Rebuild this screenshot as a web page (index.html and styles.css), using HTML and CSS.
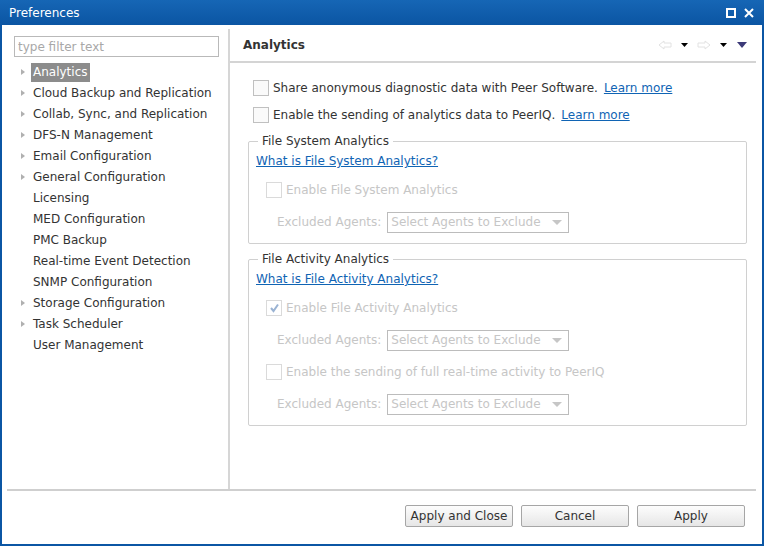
FILE: index.html
```html
<!DOCTYPE html>
<html lang="en">
<head>
    <meta charset="UTF-8">
    <title>Preferences</title>
    <link rel="stylesheet" href="styles.css">
</head>
<body>
    <div class="window">
        <div class="titlebar">
            <span class="title">Preferences</span>
            <div class="win-btns">
                <svg width="10" height="10" viewBox="0 0 10 10"><rect x="1" y="1" width="8" height="8" fill="none" stroke="#fff" stroke-width="2"/></svg>
                <svg width="10" height="10" viewBox="0 0 10 10"><path d="M1 1 L9 9 M9 1 L1 9" stroke="#fff" stroke-width="2"/></svg>
            </div>
        </div>
        <div class="main">
            <div class="left">
                <input class="filter" type="text" placeholder="type filter text">
                <ul class="tree">
                    <li class="has-kids"><span class="sel">Analytics</span></li>
                    <li class="has-kids"><span>Cloud Backup and Replication</span></li>
                    <li class="has-kids"><span>Collab, Sync, and Replication</span></li>
                    <li class="has-kids"><span>DFS-N Management</span></li>
                    <li class="has-kids"><span>Email Configuration</span></li>
                    <li class="has-kids"><span>General Configuration</span></li>
                    <li><span>Licensing</span></li>
                    <li><span>MED Configuration</span></li>
                    <li><span>PMC Backup</span></li>
                    <li><span>Real-time Event Detection</span></li>
                    <li><span>SNMP Configuration</span></li>
                    <li class="has-kids"><span>Storage Configuration</span></li>
                    <li class="has-kids"><span>Task Scheduler</span></li>
                    <li><span>User Management</span></li>
                </ul>
            </div>
            <div class="right">
                <div class="page-head">
                    <h1>Analytics</h1>
                    <div class="nav">
                        <svg width="14" height="10" viewBox="0 0 14 10"><path d="M1 5 L6 1 L6 3 L13 3 L13 7 L6 7 L6 9 Z" fill="#fff" stroke="#e2e2e2"/></svg>
                        <svg width="7" height="4" viewBox="0 0 7 4"><path d="M0 0 L7 0 L3.5 4 Z" fill="#000"/></svg>
                        <svg width="14" height="10" viewBox="0 0 14 10"><path d="M13 5 L8 1 L8 3 L1 3 L1 7 L8 7 L8 9 Z" fill="#fff" stroke="#e2e2e2"/></svg>
                        <svg width="7" height="4" viewBox="0 0 7 4"><path d="M0 0 L7 0 L3.5 4 Z" fill="#000"/></svg>
                        <svg class="menu" width="10" height="6" viewBox="0 0 10 6"><path d="M0 0 L10 0 L5 6 Z" fill="#3c3a78"/></svg>
                    </div>
                </div>
                <div class="page-body">
                    <div class="check-row">
                        <span class="box"></span>
                        <span>Share anonymous diagnostic data with Peer Software.</span>
                        <a href="#">Learn more</a>
                    </div>
                    <div class="check-row">
                        <span class="box"></span>
                        <span>Enable the sending of analytics data to PeerIQ.</span>
                        <a href="#">Learn more</a>
                    </div>

                    <fieldset class="group">
                        <legend>File System Analytics</legend>
                        <a href="#" class="what">What is File System Analytics?</a>
                        <div class="check-row off">
                            <span class="box"></span>
                            <span>Enable File System Analytics</span>
                        </div>
                        <div class="agents off">
                            <span>Excluded Agents:</span>
                            <div class="combo">Select Agents to Exclude<i></i></div>
                        </div>
                    </fieldset>

                    <fieldset class="group">
                        <legend>File Activity Analytics</legend>
                        <a href="#" class="what">What is File Activity Analytics?</a>
                        <div class="check-row off">
                            <span class="box checked">
                                <svg width="11" height="10" viewBox="0 0 11 10"><path d="M2 5 L4.5 8 L9 1.5" fill="none" stroke="#9ab3d3" stroke-width="2"/></svg>
                            </span>
                            <span>Enable File Activity Analytics</span>
                        </div>
                        <div class="agents off">
                            <span>Excluded Agents:</span>
                            <div class="combo">Select Agents to Exclude<i></i></div>
                        </div>
                        <div class="check-row off">
                            <span class="box"></span>
                            <span>Enable the sending of full real-time activity to PeerIQ</span>
                        </div>
                        <div class="agents off">
                            <span>Excluded Agents:</span>
                            <div class="combo">Select Agents to Exclude<i></i></div>
                        </div>
                    </fieldset>
                </div>
            </div>
        </div>
        <div class="footer">
            <button>Apply and Close</button>
            <button>Cancel</button>
            <button>Apply</button>
        </div>
    </div>
</body>
</html>
```

FILE: styles.css
```css
* {
    margin: 0;
    padding: 0;
    box-sizing: border-box;
}

body {
    font-family: "DejaVu Sans", Verdana, sans-serif;
    font-size: 12px;
    color: #333;
}

.window {
    width: 764px;
    height: 546px;
    background: #fff;
    border: 2px solid #0b56a4;
    border-top: none;
    display: flex;
    flex-direction: column;
}

.titlebar {
    height: 25px;
    margin: 0 -2px;
    padding: 0 10px 0 9px;
    background: linear-gradient(#1666b5, #0b55a3);
    color: #fff;
    display: flex;
    align-items: center;
    justify-content: space-between;
    font-size: 12px;
}

.win-btns {
    display: flex;
    gap: 8px;
}

.main {
    flex: 1;
    display: flex;
    padding-top: 4px;
}

.left {
    width: 228px;
    border-right: 2px solid #d6d6d6;
    padding: 7px 0 0 12px;
}

.filter {
    width: 205px;
    height: 21px;
    border: 1px solid #b9b9b9;
    padding: 0 3px;
    font: inherit;
    color: #333;
}

.filter::placeholder {
    color: #a8a8a8;
}

.tree {
    list-style: none;
    margin-top: 5px;
}

.tree li {
    height: 21px;
    display: flex;
    align-items: center;
    padding-left: 17px;
    position: relative;
    color: #333;
}

.tree li.has-kids::before {
    content: "";
    position: absolute;
    left: 7px;
    top: 7px;
    border-left: 4px solid #b0b0b0;
    border-top: 3.5px solid transparent;
    border-bottom: 3.5px solid transparent;
}

.tree span {
    padding: 2px 2px 3px 2px;
}

.tree .sel {
    background: #8c8c8c;
    color: #fff;
}

.right {
    flex: 1;
    margin-right: 6px;
}

.page-head {
    height: 34px;
    border-bottom: 2px solid #d4d4d4;
    display: flex;
    align-items: center;
    justify-content: space-between;
    padding: 0 9px 0 13px;
}

.page-head h1 {
    font-size: 12px;
    font-weight: bold;
}

.nav {
    display: flex;
    align-items: center;
    gap: 9px;
}

.nav .menu {
    margin-left: 1px;
}

.page-body {
    padding: 11px 9px 0 18px;
}

.check-row {
    display: flex;
    align-items: center;
    height: 27px;
    gap: 4px;
    margin-left: 5px;
}

.box {
    width: 16px;
    height: 16px;
    border: 1px solid #c0c0c0;
    background: #fafafa;
    display: flex;
    align-items: center;
    justify-content: center;
}

.check-row a {
    margin-left: 2px;
}

a {
    color: #1064b4;
}

.group {
    border: 1px solid #d0d0d0;
    border-radius: 2px;
    margin-top: 6px;
    padding: 0 7px 3px 7px;
}

.group + .group {
    margin-top: 8px;
}

.group legend {
    margin-left: 2px;
    padding: 0 4px;
    color: #333;
}

.what {
    display: block;
    margin-top: 6px;
    margin-bottom: 8px;
}

.group .check-row {
    margin-left: 10px;
    height: 28px;
}

.off {
    color: #c6c6c6;
}

.off .box {
    border-color: #dadada;
    background: #fff;
}

.agents {
    display: flex;
    align-items: center;
    gap: 6px;
    height: 36px;
    margin-left: 21px;
}

.combo {
    width: 182px;
    height: 21px;
    border: 1px solid #bcbcbc;
    padding-left: 3px;
    display: flex;
    align-items: center;
    justify-content: space-between;
    padding-right: 6px;
}

.combo i {
    border-top: 5px solid #c6c6c6;
    border-left: 5px solid transparent;
    border-right: 5px solid transparent;
}

.footer {
    height: 55px;
    margin: 0 6px 0 5px;
    border-top: 2px solid #cfcfcf;
    display: flex;
    justify-content: flex-end;
    align-items: flex-start;
    padding: 14px 11px 0 0;
    gap: 8px;
}

.footer button {
    width: 108px;
    height: 22px;
    font: inherit;
    color: #333;
    border: 1px solid #a6a6a6;
    border-radius: 2px;
    background: linear-gradient(#fdfdfd, #e6e6e6);
}
```
